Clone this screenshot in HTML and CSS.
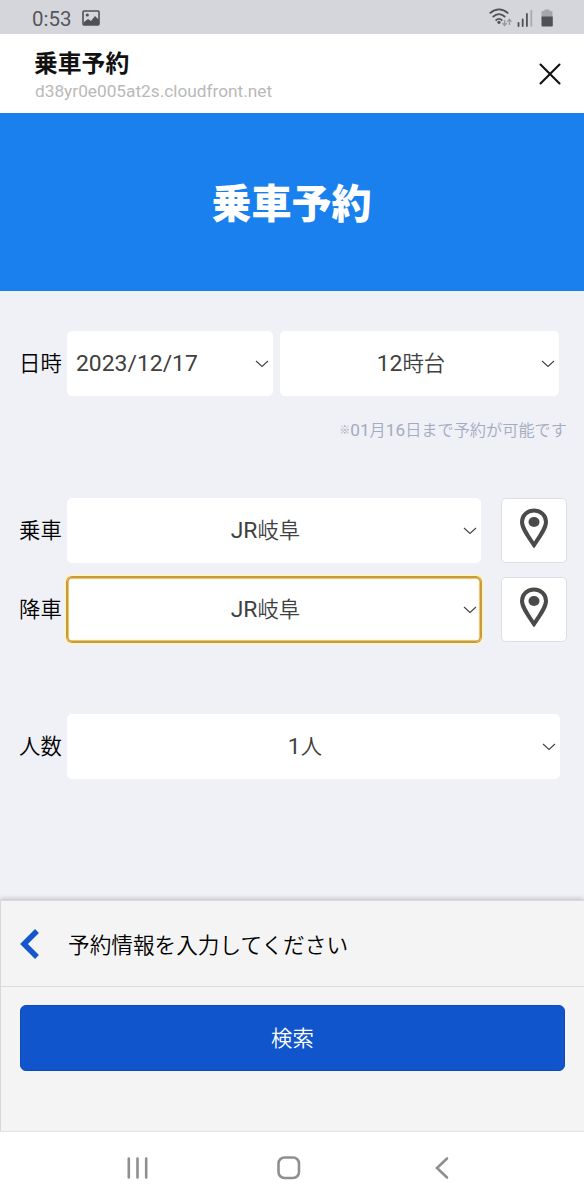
FILE: index.html
```html
<!DOCTYPE html>
<html lang="ja">
<head>
    <meta charset="utf-8">
    <title>乗車予約</title>
    <link rel="stylesheet" href="styles.css">
</head>
<body>
    <div class="status-bar">
        <span class="clock">0:53</span>
        <svg class="photo-icon" width="18" height="16" viewBox="0 0 18 16">
            <rect x="1" y="1" width="16" height="14" rx="1" fill="none" stroke="#505154" stroke-width="1.6"/>
            <circle cx="5.3" cy="5" r="1.6" fill="#505154"/>
            <path d="M2 12l4-3 3 2 4-5 4 4v5H2z" fill="#505154"/>
        </svg>
        <svg class="signal-icons" width="66" height="20" viewBox="0 0 66 20">
            <g fill="none" stroke="#505154" stroke-width="1.7">
                <path d="M.7 5.3Q10 -2.5 19.3 5.3"/>
                <path d="M3.7 9Q10 3.4 16.3 9"/>
                <path d="M6.6 12.6Q10 9.3 13.4 12.6"/>
            </g>
            <circle cx="10" cy="14.3" r="1.6" fill="#505154"/>
            <path d="M15.6 12v5M13.5 15l2.1 2.4 2.1-2.4M20.4 17v-5M18.3 13.6l2.1-2.4 2.1 2.4" fill="none" stroke="#97989b" stroke-width="1.3"/>
            <path d="M29.5 15v3M33.7 11.5V18M37.9 6V18" stroke="#505154" stroke-width="1.8" stroke-linecap="round"/>
            <path d="M42.3 2v16.5" stroke="#a9aaad" stroke-width="1.8"/>
            <path d="M52.5 4q0-1 1-1h2V1.5h5V3h2q1 0 1 1v6h-11z" fill="#a5a6a9"/>
            <path d="M52.5 8.5h11.3V17.5q0 1-1 1H53.5q-1 0-1-1z" fill="#505154"/>
        </svg>
    </div>

    <div class="browser-bar">
        <div>
            <div class="page-title">乗車予約</div>
            <div class="page-url">d38yr0e005at2s.cloudfront.net</div>
        </div>
        <svg class="close" width="22" height="22" viewBox="0 0 22 22">
            <path d="M1.5 1.5l19 19M20.5 1.5l-19 19" stroke="#111" stroke-width="2.1" stroke-linecap="round"/>
        </svg>
    </div>

    <header class="hero">
        <h1>乗車予約</h1>
    </header>

    <main class="form">
        <div class="form-row">
            <label>日時</label>
            <button class="select date"><span class="num">2023/12/17</span><svg class="arrow" width="14" height="8" viewBox="0 0 14 8"><path d="M1 1l6 5.500L13 1"/></svg></button>
            <button class="select hour"><span><span class="num">12</span>時台</span><svg class="arrow" width="14" height="8" viewBox="0 0 14 8"><path d="M1 1l6 5.500L13 1"/></svg></button>
        </div>
        <p class="note"><span class="mark">※</span><span class="num">01</span>月<span class="num">16</span>日まで予約が可能です</p>

        <div class="form-row">
            <label>乗車</label>
            <button class="select stop"><span><span class="num">JR</span>岐阜</span><svg class="arrow" width="14" height="8" viewBox="0 0 14 8"><path d="M1 1l6 5.500L13 1"/></svg></button>
            <button class="map-button">
                <svg width="30" height="40" viewBox="0 0 30 40">
                    <path d="M15 2.500C8 2.500 3 7.500 3 14c0 6 5.500 13.500 12 23 6.500-9.500 12-17 12-23 0-6.500-5-11.500-12-11.500z" fill="none" stroke="#4a4a4a" stroke-width="4"/>
                    <ellipse cx="15" cy="14" rx="5.500" ry="5"/>
                </svg>
            </button>
        </div>
        <div class="form-row">
            <label>降車</label>
            <button class="select stop focused"><span><span class="num">JR</span>岐阜</span><svg class="arrow" width="14" height="8" viewBox="0 0 14 8"><path d="M1 1l6 5.500L13 1"/></svg></button>
            <button class="map-button">
                <svg width="30" height="40" viewBox="0 0 30 40">
                    <path d="M15 2.500C8 2.500 3 7.500 3 14c0 6 5.500 13.500 12 23 6.500-9.500 12-17 12-23 0-6.500-5-11.500-12-11.500z" fill="none" stroke="#4a4a4a" stroke-width="4"/>
                    <ellipse cx="15" cy="14" rx="5.500" ry="5"/>
                </svg>
            </button>
        </div>

        <div class="form-row people">
            <label>人数</label>
            <button class="select count"><span><span class="num">1</span>人</span><svg class="arrow" width="14" height="8" viewBox="0 0 14 8"><path d="M1 1l6 5.500L13 1"/></svg></button>
        </div>
    </main>

    <section class="panel">
        <div class="panel-head">
            <svg width="20" height="32" viewBox="0 0 20 32">
                <path d="M18 3L5 16l13 13" fill="none" stroke="#1556cc" stroke-width="5.500"/>
            </svg>
            <span>予約情報を入力してください</span>
        </div>
        <div class="panel-body">
            <button class="search">検索</button>
        </div>
    </section>

    <nav class="nav-bar">
        <svg width="22" height="24" viewBox="0 0 22 24"><path d="M1.800 2.500v19M10.500 2.500v19M19.200 2.500v19"/></svg>
        <svg class="home" width="24" height="24" viewBox="0 0 24 24"><rect x="1.500" y="1.500" width="20.500" height="20.500" rx="6"/></svg>
        <svg width="14" height="24" viewBox="0 0 14 24"><path d="M12 2.500L2 12l10 9.500"/></svg>
    </nav>
</body>
</html>
```

FILE: styles.css
```css
* {
    box-sizing: border-box;
}

body {
    margin: 0;
    height: 1200px;
    display: flex;
    flex-direction: column;
    background-color: #eff1f6;
    font-family: Roboto, "Noto Sans CJK JP", sans-serif;
    font-size: 21.4px;
    font-weight: 350;
    color: #000;
    overflow: hidden;
}

button {
    font: inherit;
    border: none;
    padding: 0;
}

svg {
    display: block;
}

.status-bar {
    display: flex;
    align-items: center;
    height: 34px;
    padding: 2px 29px 0 32px;
    background-color: #d5d6db;
}

.clock {
    padding-top: 1px;
    font-size: 20.5px;
    font-weight: 400;
    color: #55565a;
}

.photo-icon {
    margin-left: 10px;
}

.signal-icons {
    margin-left: auto;
}

.browser-bar {
    display: flex;
    justify-content: space-between;
    height: 79px;
    padding: 15px 23px 0 35px;
    background-color: #fff;
}

.page-title {
    margin-left: -1px;
    font-size: 23.8px;
    font-weight: 700;
    line-height: 30px;
    color: #111;
}

.page-url {
    font-size: 17.25px;
    font-weight: 400;
    line-height: 24px;
    color: #b9b9b9;
}

.close {
    margin-top: 14px;
}

.hero {
    display: flex;
    justify-content: center;
    height: 178px;
    padding: 62px 1px 0 0;
    background-color: #1980ee;
}

.hero h1 {
    margin: 0;
    font-size: 40px;
    font-weight: 900;
    line-height: 60px;
    color: #fff;
}

.form {
    height: 609px;
    padding: 40px 17px 0 19px;
}

.form-row {
    display: flex;
    align-items: center;
    height: 65px;
    margin-bottom: 14px;
}

.form-row label {
    width: 48px;
    padding-bottom: 4px;
}

.select {
    display: flex;
    align-items: center;
    justify-content: center;
    position: relative;
    height: 65px;
    padding-bottom: 4px;
    background-color: #fff;
    border-radius: 5px;
    color: #404040;
}

.num {
    font-size: 22.9px;
    font-weight: 400;
}

.arrow {
    position: absolute;
    right: 4px;
    top: 29px;
    fill: none;
    stroke: #444;
    stroke-width: 1.1;
}

.date {
    width: 206px;
    justify-content: flex-start;
    padding: 0 0 0 9px;
    margin-right: 7px;
}

.hour {
    width: 279px;
    padding-right: 17px;
}

.stop {
    width: 414px;
    padding-right: 17px;
    margin-right: 20px;
}

.focused {
    box-shadow: 0 0 0 1px #c99a35, 0 0 0 3px #fbf3d2, inset 0 0 0 1.5px #c99a35, inset 0 0 0 2.5px #fff3cb;
}

.count {
    width: 493px;
    padding-right: 17px;
}

.note {
    margin: 0 0 50px;
    padding-top: 3px;
    font-size: 16.2px;
    line-height: 34px;
    text-align: right;
    color: #a4aac0;
}

.note .num {
    font-size: 17.2px;
}

.mark {
    font-size: 11px;
    vertical-align: 2px;
}

.map-button {
    display: flex;
    justify-content: center;
    width: 66px;
    height: 65px;
    padding-top: 9px;
    background-color: #fff;
    border: 1px solid #dedfe2;
    border-radius: 5px;
    fill: #4a4a4a;
}

.people {
    margin-top: 72px;
}

.panel {
    height: 231px;
    background-color: #f4f4f4;
    border-top: 1px solid #d8d9dc;
    border-left: 1px solid #d8d8d8;
    box-shadow: 0 -1px 5px rgba(0, 0, 0, 0.22);
}

.panel-head {
    display: flex;
    align-items: center;
    gap: 29px;
    height: 86px;
    padding-left: 18px;
    border-bottom: 1px solid #dcdcdc;
    font-size: 21.65px;
}

.panel-head span {
    padding-bottom: 1px;
}

.panel-body {
    padding: 18px 19px;
}

.search {
    display: block;
    width: 545px;
    height: 66px;
    padding-bottom: 3px;
    background-color: #1055cc;
    border: 1px solid #0d4bb8;
    border-radius: 6px;
    color: #fff;
}

.nav-bar {
    display: flex;
    justify-content: space-between;
    height: 69px;
    padding: 24px 135px 0 127px;
    background-color: #fff;
    border-top: 1px solid #e3e3e3;
    fill: none;
    stroke: #8f8f8f;
    stroke-width: 2.6;
    stroke-linecap: round;
}

.home {
    margin-right: 6px;
}
```
